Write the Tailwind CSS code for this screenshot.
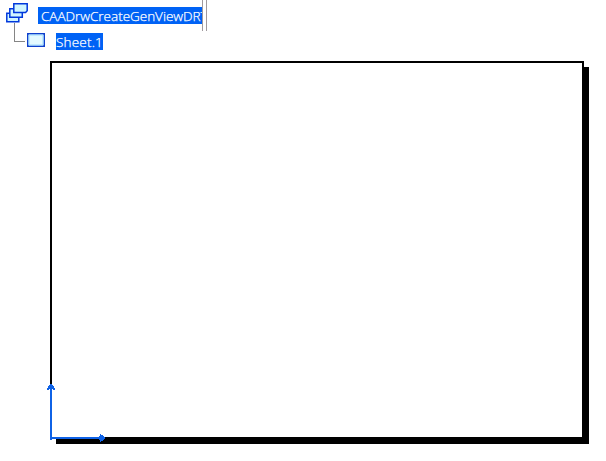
<!DOCTYPE html>
<html lang="en">
<head>
<meta charset="utf-8">
<title>Drawing</title>
<script src="https://cdn.jsdelivr.net/npm/@tailwindcss/browser@4"></script>
</head>
<body class="relative h-[461px] w-[606px] overflow-hidden bg-white font-['Open_Sans','Noto_Sans',sans-serif] text-[13.5px] font-light text-white [-webkit-text-stroke:0.25px_white]">
  <!-- Specification tree -->
  <header class="h-[61px]">
    <div class="flex h-[31px] w-[207px] items-start">
      <svg class="mt-0.5 ml-1.5 h-[22px] w-[23px] shrink-0" viewBox="0 0 23 22" fill="#d0f6ff" stroke="#0038dc" stroke-width="1.5">
        <path d="M.8 11.2h12v8.6H.8z"/>
        <path d="M3.8 6.7h12.5v8.6H3.8z"/>
        <path d="M7.8 1.8h13.4v7l-1.6 1.7H7.8z"/>
      </svg>
      <div class="mt-[7px] ml-[9px] h-[17px] w-[164px] shrink-0 overflow-hidden bg-[#0062f5] pl-[3px] leading-[18px] whitespace-nowrap"><span class="tracking-[-0.02px]">CAADrwCreateGenViewDRT</span></div>
      <div class="h-[31px] w-[5px] shrink-0 border-x border-[#a09a9e]"></div>
    </div>
    <div class="flex h-[19px] items-start">
      <svg class="-mt-2 ml-3.5 h-[20px] w-[12px] shrink-0" viewBox="0 0 12 20" fill="none" stroke="#858585" shape-rendering="crispEdges"><path d="M.5 0v18.5H11"/></svg>
      <svg class="mt-[2px] ml-px h-[14px] w-[18px] shrink-0" viewBox="0 0 18 14"><path d="M.75.75h16.5v12.5H.75z" fill="#e4faff" stroke="#0f40cc" stroke-width="1.5"/><path d="M2 2h14v10H2z" fill="none" stroke="#a0dcff"/></svg>
      <div class="mt-[2px] ml-[11px] h-[17px] w-[47px] shrink-0 overflow-hidden bg-[#0062f5] leading-[18px] whitespace-nowrap"><span class="tracking-[0.2px]">Sheet.1</span></div>
    </div>
  </header>
  <!-- Drawing sheet -->
  <main class="ml-[50px] h-[378px] w-[534px] border-2 border-black bg-white shadow-[5.5px_5.5px_0_-0.5px_black]"></main>
  <!-- Axis arrows at the sheet origin -->
  <svg class="absolute inset-0 h-[461px] w-[606px]" viewBox="0 0 606 461">
    <path d="M50 384h2v1h1v1h1v2h1v2h-2v-1h-1v48h47v-1h1v-2h1v1h2v1h1v1h1v2h-1v1h-1v1h-2v1h-1v-2h-1v-1H52v1h-2v-51h-1v1h-2v-2h1v-2h1v-1h1z" fill="#0f62e6" shape-rendering="crispEdges"/>
  </svg>
</body>
</html>
